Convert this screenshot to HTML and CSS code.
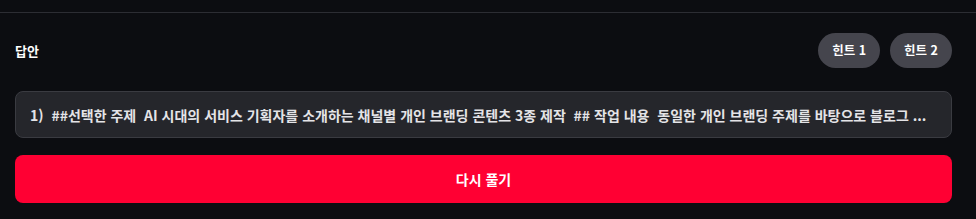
FILE: index.html
```html
<!DOCTYPE html>
<html lang="ko">
<head>
<meta charset="utf-8">
<link rel="stylesheet" href="styles.css">
</head>
<body>
<div class="page">
  <div class="divider"></div>
  <section class="answer">
    <div class="head">
      <h2 class="title">답안</h2>
      <div class="hints">
        <button class="hint">힌트 1</button>
        <button class="hint">힌트 2</button>
      </div>
    </div>
    <div class="box"><span class="box-text">1)  ##선택한 주제  AI 시대의 서비스 기획자를 소개하는 채널별 개인 브랜딩 콘텐츠 3종 제작  ## 작업 내용  동일한 개인 브랜딩 주제를 바탕으로 블로그 ...</span></div>
    <button class="retry">다시 풀기</button>
  </section>
</div>
</body>
</html>
```
FILE: styles.css
```css
* { box-sizing: border-box; }
html, body { margin: 0; padding: 0; background: #0c0d11; }
body {
  font-family: "Noto Sans CJK KR", "Noto Sans", sans-serif;
  color: #fff;
  width: 976px;
  height: 219px;
  overflow: hidden;
}
.page { padding-top: 12px; }
.divider { height: 1px; background: #2c2d33; }
.answer { padding: 20px 24px 0 15px; }
.head {
  display: flex;
  align-items: center;
  justify-content: space-between;
  height: 35px;
}
.title {
  margin: 0;
  font-size: 13px;
  font-weight: 700;
  color: #fff;
  line-height: 1;
}
.hints { display: flex; gap: 10px; }
.hint {
  height: 35px;
  padding: 0 14px;
  border: none;
  border-radius: 18px;
  background: #45454d;
  color: #fff;
  font-family: inherit;
  font-size: 12.5px;
  font-weight: 700;
  line-height: 1;
}
.box {
  margin-top: 23px;
  height: 47px;
  border: 1px solid #3a3b41;
  border-radius: 8px;
  background: #25262b;
  padding: 0 14px;
  display: flex;
  align-items: center;
  overflow: hidden;
}
.box-text {
  white-space: pre;
  overflow: hidden;
  font-size: 14px;
  font-weight: 700;
  color: #e4e4e7;
}
.retry {
  display: block;
  width: 100%;
  margin-top: 17px;
  height: 48px;
  border: none;
  border-radius: 8px;
  background: #ff0033;
  color: #fff;
  font-family: inherit;
  font-size: 14px;
  font-weight: 700;
}
```
